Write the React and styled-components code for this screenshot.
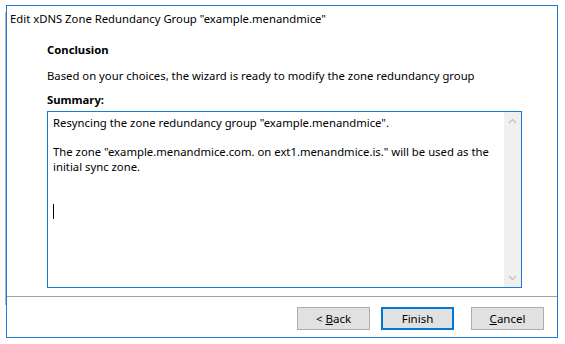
import React from 'react'
import styled, { createGlobalStyle } from 'styled-components'

const GlobalStyle = createGlobalStyle`
  html, body {
    margin: 0;
    padding: 0;
    background: #ffffff;
  }
  body {
    font-family: 'Noto Sans', 'Open Sans', sans-serif;
    font-size: 11.3px;
    color: #000000;
  }
`

const Page = styled.div`
  display: flex;
  align-items: flex-start;
  width: 565px;
  height: 344px;
  padding: 5px 0 0 5px;
  box-sizing: border-box;
`

const BehindEdge = styled.div`
  width: 1px;
  height: 293px;
  margin-top: 7px;
  background: #b4b4b4;
`

const Window = styled.div`
  display: flex;
  flex-direction: column;
  width: 552px;
  height: 333px;
  box-sizing: border-box;
  border: 1px solid #1f7ad3;
  background: #ffffff;
`

const TitleBar = styled.div`
  height: 24px;
  display: flex;
  align-items: center;
  padding-left: 3px;
  white-space: nowrap;
`

const Content = styled.div`
  flex: 1;
  display: flex;
  flex-direction: column;
  padding: 12px 0 0 40px;
`

const Heading = styled.div`
  font-weight: 700;
  line-height: 16px;
  margin-top: ${p => p.$top || 0}px;
`

const Text = styled.div`
  line-height: 16px;
  margin-top: ${p => p.$top || 0}px;
  white-space: nowrap;
`

const SummaryBox = styled.div`
  display: flex;
  width: 475px;
  height: 177px;
  margin-top: 3px;
  box-sizing: border-box;
  border: 1px solid #1a78d6;
`

const SummaryText = styled.div`
  flex: 1;
  padding: 4px 0 0 5px;
  line-height: 14.6px;
`

const Line = styled.div`
  height: 14.6px;
  white-space: nowrap;
`

const Caret = styled.span`
  display: inline-block;
  width: 1px;
  height: 15px;
  background: #000000;
  vertical-align: top;
`

const ScrollBar = styled.div`
  width: 17px;
  background: #f0f0f0;
  display: flex;
  flex-direction: column;
  justify-content: space-between;
  align-items: center;
  padding: 6px 0;
`

const Footer = styled.div`
  height: 41px;
  box-sizing: border-box;
  border-top: 1px solid #a0a0a0;
  display: flex;
  justify-content: flex-end;
  align-items: flex-start;
  padding: 10px 13px 0 0;
`

const Button = styled.button`
  width: 73px;
  height: 23px;
  margin-left: ${p => p.$gap || 0}px;
  box-sizing: border-box;
  padding: 0;
  font-family: 'Noto Sans', 'Open Sans', sans-serif;
  font-size: 11.5px;
  color: #000000;
  background: #e1e1e1;
  border: ${p => p.$default ? '2px solid #0078d7' : '1px solid #adadad'};
  border-radius: 0;

  u {
    text-decoration: underline;
  }
`

const Chevron = ({ up }) => (
  <svg width="9" height="6" viewBox="0 0 9 6">
    <polyline
      points={up ? '1,5 4.5,1.5 8,5' : '1,1 4.5,4.5 8,1'}
      fill="none"
      stroke="#c2c2c2"
      strokeWidth="1.4"
    />
  </svg>
)

export default function App() {
  return (
    <>
      <GlobalStyle />
      <Page>
        <BehindEdge />
        <Window>
          <TitleBar>Edit xDNS Zone Redundancy Group "example.menandmice"</TitleBar>
          <Content>
            <Heading>Conclusion</Heading>
            <Text $top={10}>Based on your choices, the wizard is ready to modify the zone redundancy group</Text>
            <Heading $top={8}>Summary:</Heading>
            <SummaryBox>
              <SummaryText>
                <Line>Resyncing the zone redundancy group "example.menandmice".</Line>
                <Line />
                <Line>The zone "example.menandmice.com. on ext1.menandmice.is." will be used as the</Line>
                <Line>initial sync zone.</Line>
                <Line />
                <Line />
                <Line><Caret /></Line>
              </SummaryText>
              <ScrollBar>
                <Chevron up />
                <Chevron />
              </ScrollBar>
            </SummaryBox>
          </Content>
          <Footer>
            <Button>&lt; <u>B</u>ack</Button>
            <Button $default $gap={11}>Finish</Button>
            <Button $gap={17}><u>C</u>ancel</Button>
          </Footer>
        </Window>
      </Page>
    </>
  )
}
